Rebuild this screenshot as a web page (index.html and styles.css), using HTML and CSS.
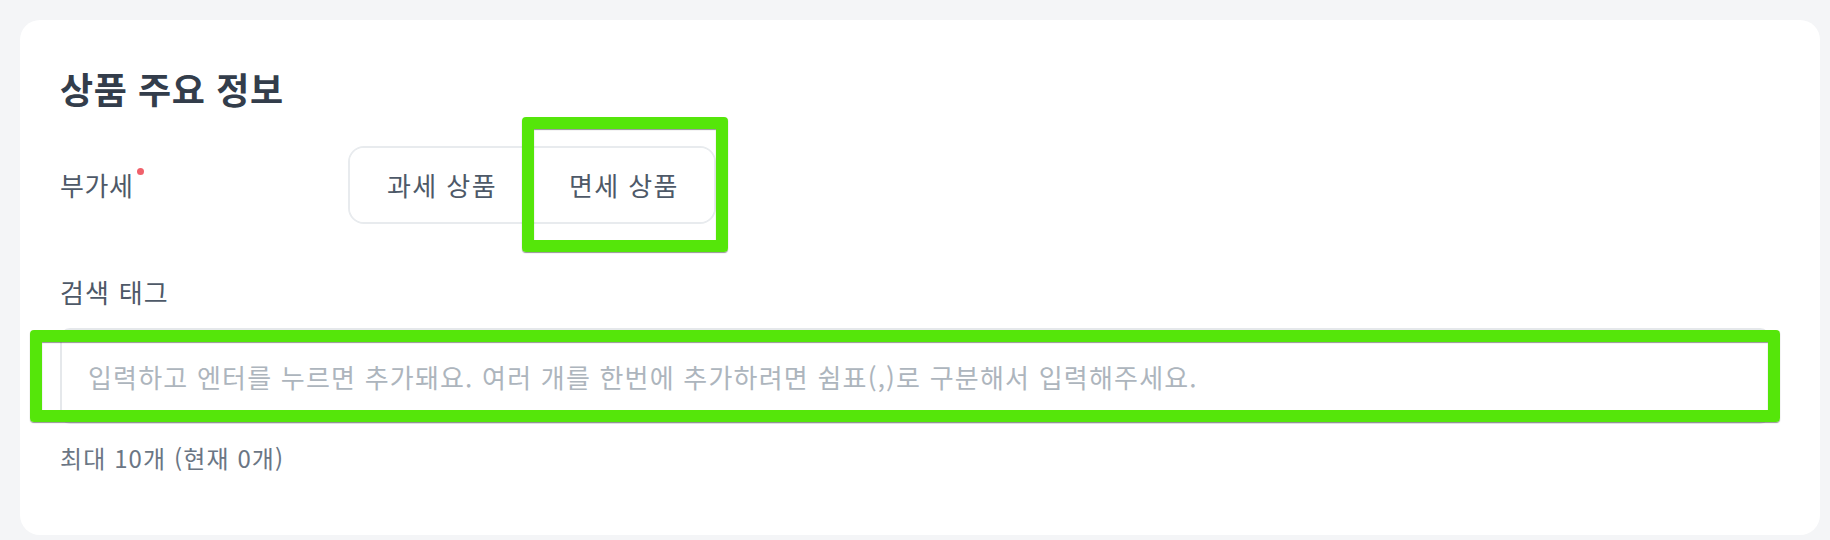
FILE: index.html
```html
<!DOCTYPE html>
<html lang="ko">
<head>
<meta charset="utf-8">
<title>상품 주요 정보</title>
<link rel="stylesheet" href="styles.css">
</head>
<body>
<div class="page">
  <section class="card">
    <h2 class="card-title">상품 주요 정보</h2>
    <div class="field-row">
      <div class="field-label"><span>부가세</span><span class="required-dot"></span></div>
      <div class="segmented">
        <button class="seg-btn" type="button">과세 상품</button>
        <button class="seg-btn" type="button">면세 상품</button>
      </div>
    </div>
    <div class="tag-label">검색 태그</div>
    <input class="tag-input" type="text" placeholder="입력하고 엔터를 누르면 추가돼요. 여러 개를 한번에 추가하려면 쉼표(,)로 구분해서 입력해주세요.">
    <div class="helper">최대 10개 (현재 0개)</div>
  </section>
  <div class="highlight highlight-btn"></div>
  <div class="highlight highlight-input"></div>
</div>
</body>
</html>
```

FILE: styles.css
```css
* { box-sizing: border-box; }
html, body { margin: 0; padding: 0; }
body {
  background: #f4f5f7;
  font-family: "Noto Sans CJK KR", "Noto Sans", sans-serif;
  width: 1830px;
  height: 540px;
  overflow: hidden;
}
.page {
  position: relative;
  padding: 20px 10px 5px 20px;
}
.card {
  width: 1800px;
  height: 515px;
  background: #ffffff;
  border-radius: 20px;
  padding: 44px 50px 0 40px;
}
.card-title {
  margin: 0;
  font-size: 36px;
  line-height: 48px;
  font-weight: 700;
  color: #333d4b;
  letter-spacing: 0.6px;
}
.field-row {
  display: flex;
  align-items: center;
  margin-top: 34px;
  height: 78px;
}
.field-label {
  width: 288px;
  display: flex;
  align-items: flex-start;
  font-size: 26px;
  line-height: 36px;
  color: #4e5968;
  letter-spacing: 0.6px;
}
.required-dot {
  width: 7px;
  height: 7px;
  border-radius: 50%;
  background: #f0616b;
  margin-left: 3px;
  margin-top: 1px;
}
.segmented {
  display: flex;
  height: 78px;
  border: 2px solid #e8ebee;
  border-radius: 16px;
  overflow: hidden;
}
.seg-btn {
  font-family: inherit;
  font-size: 26px;
  line-height: 36px;
  color: #4e5968;
  background: #ffffff;
  border: none;
  padding: 0 35px 0 37px;
  margin: 0;
  letter-spacing: 1.4px;
}
.tag-label {
  margin-top: 50px;
  font-size: 26px;
  line-height: 36px;
  color: #4e5968;
  letter-spacing: 1.2px;
}
.tag-input {
  display: block;
  margin-top: 18px;
  width: 1710px;
  height: 96px;
  border: 2px solid #e5e8eb;
  border-radius: 10px;
  padding: 0 26px;
  font-family: inherit;
  font-size: 26px;
  color: #333d4b;
  background: #ffffff;
  outline: none;
  letter-spacing: 1.2px;
}
.tag-input::placeholder {
  color: #adb5bd;
}
.helper {
  margin-top: 17px;
  font-size: 24px;
  line-height: 34px;
  color: #6b7684;
  letter-spacing: 1.1px;
}
.highlight {
  position: absolute;
  border: 12px solid #55e60a;
  border-radius: 4px;
  box-shadow: 0 1px 1px rgba(60, 60, 60, 0.55), inset 0 1px 1px rgba(60, 60, 60, 0.55);
  pointer-events: none;
}
.highlight-btn {
  left: 522px;
  top: 117px;
  width: 206px;
  height: 135px;
}
.highlight-input {
  left: 30px;
  top: 330px;
  width: 1750px;
  height: 92px;
}
```
